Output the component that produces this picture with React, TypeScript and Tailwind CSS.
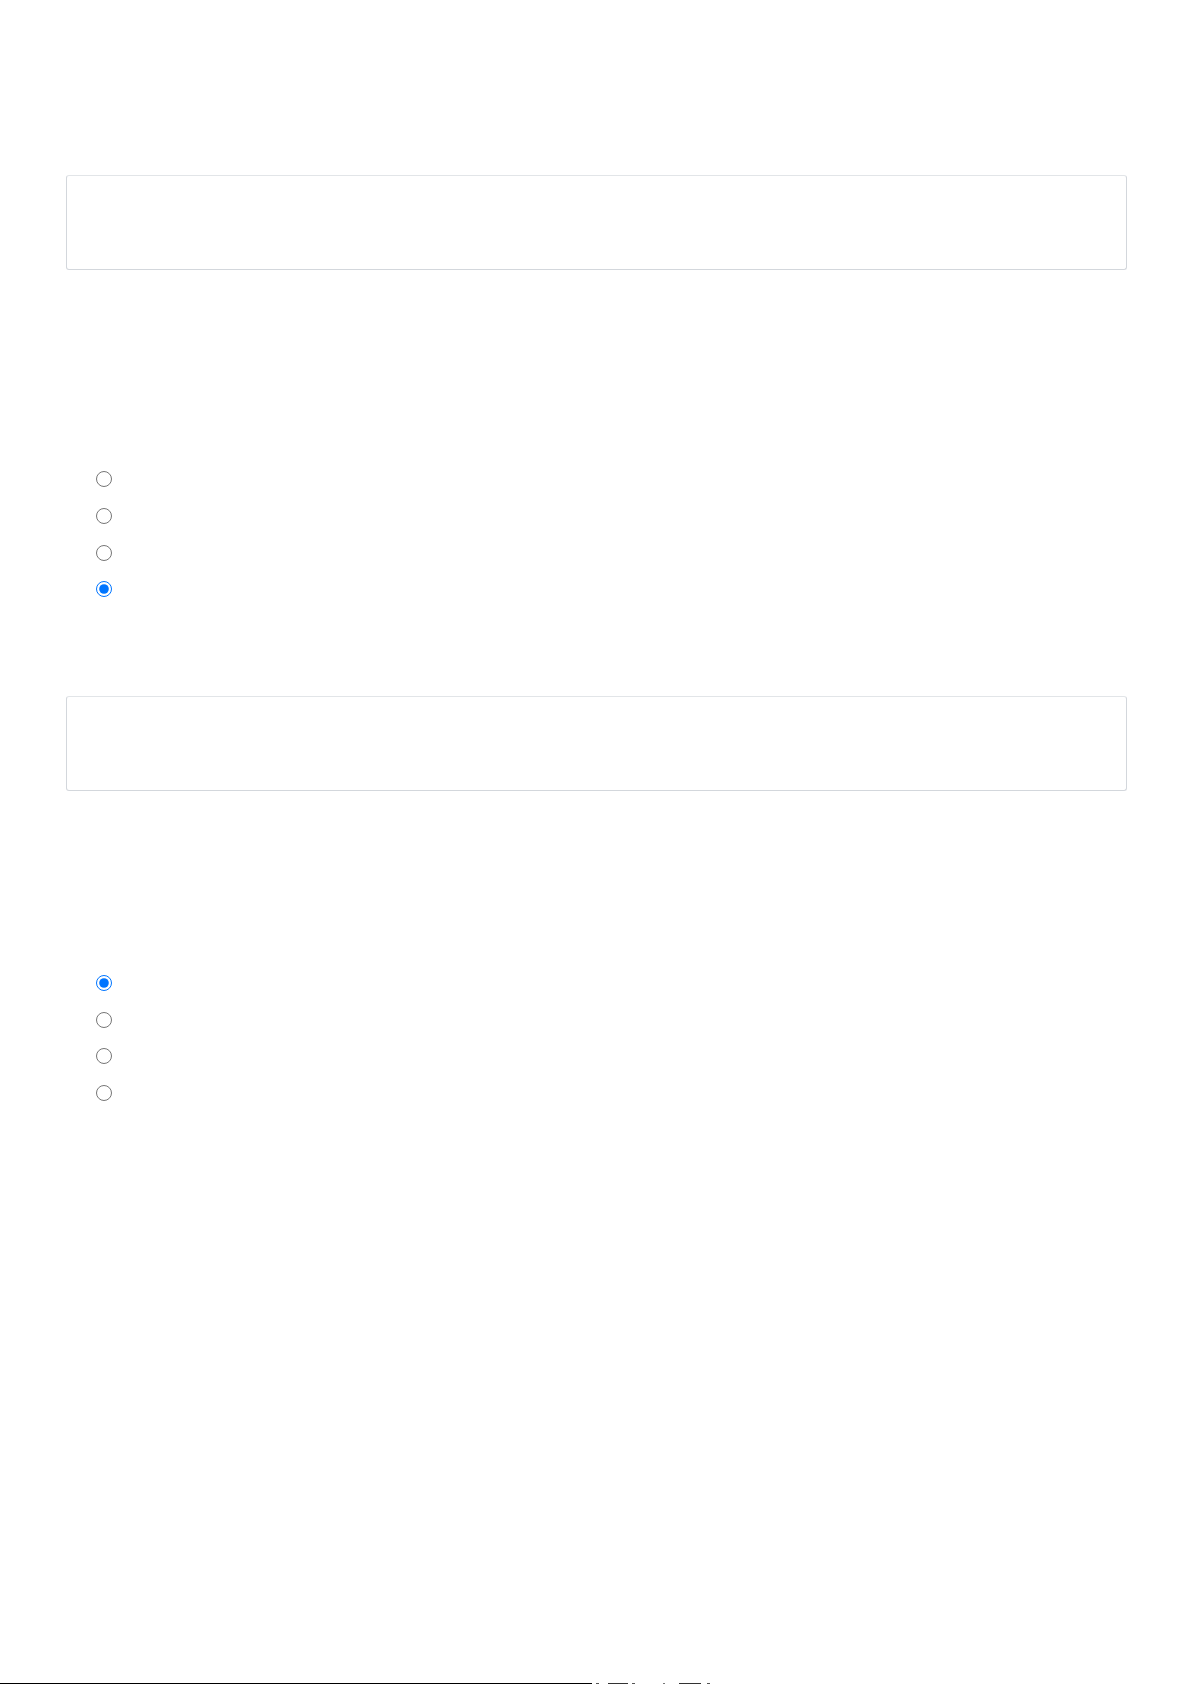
import React from "react";

function RadioGroup({ name, checked }: { name: string; checked: number }) {
  return (
    <div className="flex flex-col">
      {[0, 1, 2, 3].map((i) => (
        <label key={i} className="flex h-[36.67px] items-center pl-[30px]">
          <input
            type="radio"
            name={name}
            defaultChecked={i === checked}
            className="m-0 h-[16px] w-[16px] accent-[#0075ff]"
          />
        </label>
      ))}
    </div>
  );
}

export default function App() {
  return (
    <div className="min-h-[1685px] bg-white font-['Liberation_Sans',Arial,sans-serif]">
      <div className="pl-[66px] pr-[64px] pt-[175px]">
        <div className="h-[95px] w-full rounded-[3px] border border-[#d3d7dc] border-t-[#e2e5e8]" />
        <div className="mt-[191px]">
          <RadioGroup name="g1" checked={3} />
        </div>
        <div className="mt-[88px] h-[95px] w-full rounded-[3px] border border-[#d3d7dc] border-t-[#e2e5e8]" />
        <div className="mt-[174px]">
          <RadioGroup name="g2" checked={0} />
        </div>
      </div>
      <div className="mt-[572px] flex h-px items-start">
        <div className="h-px w-[592px] bg-black" />
        <div className="ml-[4px] h-px w-[3px] bg-[#555555]" />
        <div className="ml-[9px] h-px w-[20px] bg-[#333333]" />
        <div className="ml-[4px] h-px w-[3px] bg-[#555555]" />
        <div className="ml-[28px] h-px w-[2px] bg-[#777777]" />
        <div className="ml-[14px] h-px w-[22px] bg-[#333333]" />
        <div className="ml-[6px] h-px w-[3px] bg-[#555555]" />
      </div>
    </div>
  );
}
